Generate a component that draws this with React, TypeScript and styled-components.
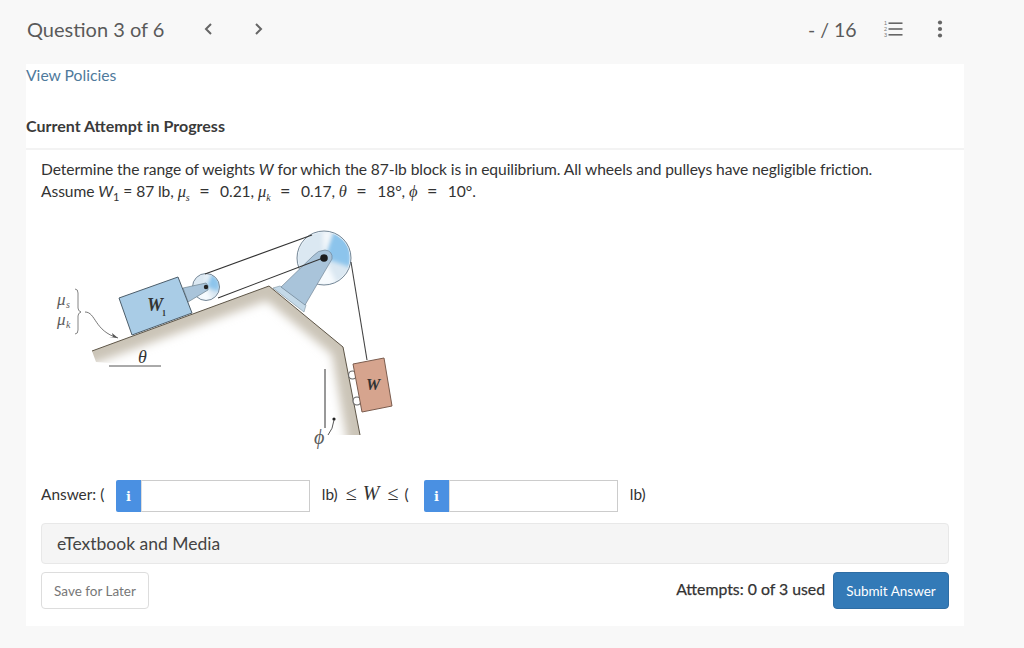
import React from "react";
import styled, { createGlobalStyle } from "styled-components";

const Global = createGlobalStyle`
  html, body { margin: 0; padding: 0; background: #f8f8f8; }
  body { font-family: Lato, "Open Sans", sans-serif; color: #333; }
`;
const Page = styled.div`
  width: 1024px;
  height: 648px;
  overflow: hidden;
  background: #f8f8f8;
`;
const Header = styled.header`
  height: 64px;
  box-sizing: border-box;
  padding: 0 0 6px 26px;
  display: flex;
  align-items: center;
`;
const QuestionTitle = styled.h1`
  margin: 0;
  font-size: 20px;
  font-weight: 400;
  color: #5a5a5a;
  width: 155px;
  padding-left: 1px;
`;
const NavButton = styled.button`
  width: 51px;
  height: 30px;
  padding: 0;
  border: 0;
  background: none;
  display: flex;
  align-items: center;
  justify-content: center;
  color: #666;
`;
const Score = styled.div`
  margin-left: auto;
  font-size: 19.5px;
  color: #5a5a5a;
  width: 66px;
`;
const IconSlot = styled.div`
  width: 38px;
  display: flex;
  justify-content: center;
  align-items: center;
`;
const HeaderEnd = styled.div`
  width: 56px;
  margin-right: 56px;
  display: flex;
  justify-content: center;
`;
const Card = styled.main`
  width: 938px;
  height: 562px;
  margin-left: 26px;
  background: #fff;
`;
const Policies = styled.a`
  display: block;
  height: 21px;
  padding-top: 1px;
  font-size: 15.7px;
  line-height: 21px;
  color: #4f7a9c;
`;
const AttemptTitle = styled.h2`
  margin: 30px 0 0;
  height: 32px;
  box-sizing: border-box;
  font-size: 16px;
  line-height: 20px;
  font-weight: 700;
  color: #3a3a3a;
`;
const Rule = styled.div`
  height: 2px;
  background: #f3f3f3;
`;
const Body = styled.section`
  padding: 8px 15px 0;
`;
const Prompt = styled.p`
  margin: 0;
  height: 44px;
  font-size: 15.6px;
  line-height: 22px;
  color: #333;
  letter-spacing: -0.08px;
`;
const MathVar = styled.i`
  font-family: "Liberation Serif", serif;
  font-size: 16.5px;
  line-height: 0;
`;
const PlainVar = styled.i``;
const Sub = styled.sub`
  font-size: 11px;
  line-height: 0;
  font-family: Lato, sans-serif;
`;
const MathSub = styled.sub`
  font-size: 10px;
  line-height: 0;
  font-family: "Liberation Serif", serif;
  font-style: italic;
`;
const Eq = styled.span`
  margin: 0 6px 0 5px;
  font-size: 18px;
  line-height: 0;
`;
const Figure = styled.svg`
  display: block;
  width: 360px;
  height: 260px;
  margin: 8px 0 0 0;
`;
const AnswerRow = styled.div`
  height: 32px;
  margin-top: 10px;
  display: flex;
  align-items: center;
  font-size: 15.4px;
  color: #333;
`;
const Label = styled.span<{ $w: number }>`
  width: ${(p) => p.$w}px;
  flex: none;
  white-space: nowrap;
  padding-bottom: 5px;
`;
const InfoButton = styled.div`
  width: 25px;
  height: 32px;
  background: #4a90e2;
  border-radius: 2px 0 0 2px;
  display: flex;
  align-items: center;
  justify-content: center;
  color: #fff;
  font: 700 13px "DejaVu Serif", serif;
  flex: none;
`;
const AnswerInput = styled.div`
  width: 169px;
  height: 32px;
  box-sizing: border-box;
  border: 1px solid #ccc;
  border-left: 1px solid #ddd;
  background: #fff;
  flex: none;
`;
const Leq = styled.span`
  margin: 0 6px 0 8px;
  font-family: "Liberation Serif", serif;
  font-size: 20px;
  line-height: 0;
`;
const WVar = styled.i`
  font-family: "Liberation Serif", serif;
  font-size: 20px;
  line-height: 0;
`;
const Resources = styled.div`
  height: 41px;
  margin-top: 11px;
  box-sizing: border-box;
  padding: 0 15px;
  display: flex;
  align-items: center;
  background: #f5f5f5;
  border: 1px solid #e8e8e8;
  border-radius: 4px;
  font-size: 17.5px;
  color: #444;
`;
const Actions = styled.div`
  margin-top: 8px;
  height: 37px;
  display: flex;
  align-items: center;
`;
const SaveButton = styled.button`
  width: 108px;
  height: 37px;
  border: 1px solid #ddd;
  border-radius: 4px;
  background: #fff;
  font: 400 13.5px Lato, sans-serif;
  color: #777;
  padding: 0;
`;
const Attempts = styled.span`
  margin-left: auto;
  margin-right: 8px;
  margin-bottom: 5px;
  font-size: 15.8px;
  -webkit-text-stroke: 0.25px #333;
  color: #333;
`;
const SubmitButton = styled.button`
  width: 116px;
  height: 37px;
  border: 1px solid #2e6da4;
  border-radius: 4px;
  background: #337ab7;
  font: 400 13.5px Lato, sans-serif;
  color: #fff;
  padding: 0;
`;
const DiagramText = styled.text<{ $size: number; $weight?: number }>`
  font-family: "Liberation Serif", serif;
  font-style: italic;
  font-weight: ${(p) => p.$weight ?? 700};
  font-size: ${(p) => p.$size}px;
  fill: #333;
`;
const LightText = styled.text<{ $size: number }>`
  font-family: "Liberation Serif", serif;
  font-style: italic;
  font-size: ${(p) => p.$size}px;
  fill: #5c5c5c;
`;
const TinyText = styled.text`
  font-family: "Liberation Serif", serif;
  font-size: 8px;
  font-weight: 700;
  fill: #333;
`;
const IconDigit = styled.text`
  font-family: "Liberation Sans", sans-serif;
  font-size: 5.5px;
  fill: #777;
`;

function Chevron({ left }: { left?: boolean }) {
  return (
    <svg width="14" height="16" viewBox="0 0 14 16" fill="none" stroke="currentColor" strokeWidth="2">
      <path d={left ? "M10 3 L5 8 L10 13" : "M4 3 L9 8 L4 13"} />
    </svg>
  );
}

function ListIcon() {
  return (
    <svg width="20" height="18" viewBox="0 0 20 18" fill="#666">
      <rect x="5.5" y="2.4" width="14" height="1.6" />
      <rect x="5.5" y="8.2" width="14" height="1.6" />
      <rect x="5.5" y="14" width="14" height="1.6" />
      <IconDigit x="1" y="5">1</IconDigit>
      <IconDigit x="1" y="11">2</IconDigit>
      <IconDigit x="1" y="17">3</IconDigit>
    </svg>
  );
}

function Dots() {
  return (
    <svg width="6" height="18" viewBox="0 0 6 18" fill="#666">
      <circle cx="3" cy="2.5" r="2.1" />
      <circle cx="3" cy="9" r="2.1" />
      <circle cx="3" cy="15.5" r="2.1" />
    </svg>
  );
}

function Pulley({ cx, cy, r, clip }: { cx: number; cy: number; r: number; clip: string }) {
  return (
    <g>
      <clipPath id={clip}>
        <circle cx={cx} cy={cy} r={r} />
      </clipPath>
      <circle cx={cx} cy={cy} r={r} fill="#dbe8f2" />
      <g clipPath={`url(#${clip})`}>
        <path
          d={`M${cx} ${cy} L${cx + r * 0.35} ${cy - r} L${cx + r} ${cy - r * 0.6} L${cx + r} ${cy + r * 0.35} Z`}
          fill="#8cc4ec"
          filter="url(#soft)"
        />
        <path
          d={`M${cx} ${cy} L${cx - r * 0.9} ${cy + r * 0.7} L${cx - r * 0.1} ${cy + r * 1.1} L${cx + r * 0.5} ${cy + r} Z`}
          fill="#f7fbfe"
          filter="url(#soft)"
        />
        <path
          d={`M${cx} ${cy} L${cx - r * 0.05} ${cy - r} L${cx + r * 0.3} ${cy - r} Z`}
          fill="#f4f8fb"
          filter="url(#soft)"
        />
        <circle cx={cx} cy={cy} r={r} fill="none" stroke="#eef5fa" strokeWidth={r * 0.1} opacity="0.8" />
      </g>
      <circle cx={cx} cy={cy} r={r} fill="none" stroke="#66798a" strokeWidth="0.9" />
    </g>
  );
}

function Diagram() {
  return (
    <Figure viewBox="41 210 360 260">
      <defs>
        <filter id="soft" x="-30%" y="-30%" width="160%" height="160%">
          <feGaussianBlur stdDeviation="2" />
        </filter>
        <filter id="shadeBlur" x="-20%" y="-20%" width="140%" height="140%">
          <feGaussianBlur stdDeviation="5" />
        </filter>
        <clipPath id="groundClip">
          <path d="M92 351 L269 286 L343 347 L360 435 L330 435 L300 380 L200 370 L96 362 Z" />
        </clipPath>
      </defs>

      <g clipPath="url(#groundClip)">
        <path d="M80 356 L269 287 L343 348 L360 445" fill="none" stroke="#cbc4b7" strokeWidth="24" filter="url(#shadeBlur)" />
      </g>
      <path d="M92 351 L269 286 L343 347 L360 435" fill="none" stroke="#5d5547" strokeWidth="1" />

      <Pulley cx={206} cy={287} r={13.5} clip="smallPulley" />
      <path d="M183 288 L206 283 Q209 285 208 290 L188 302 Z" fill="#a9c4da" stroke="#60737f" strokeWidth="0.6" />
      <circle cx="206" cy="287" r="2.2" fill="#222" />

      <path d="M119 298 L178 277 L192 313 L132 335 Z" fill="#a9cce6" stroke="#4c5d6a" strokeWidth="1" />
      <DiagramText x="147" y="311" $size={18}>W</DiagramText>
      <TinyText x="162" y="316">1</TinyText>

      <Pulley cx={324} cy={258} r={27} clip="bigPulley" />
      <path d="M205 274 L312 235" fill="none" stroke="#333" strokeWidth="1.1" />
      <path d="M273 288 L280 286 L306 305 L304 312 Z" fill="#c4d9e8" stroke="#7c92a0" strokeWidth="0.6" />
      <path d="M281 287 L313 256 Q318 250 325 250 Q333 251 332 259 L305 305 Z" fill="#a9c4da" stroke="#66798a" strokeWidth="0.6" />
      <path d="M218 298 L323 258" fill="none" stroke="#333" strokeWidth="1.1" />
      <circle cx="324" cy="258" r="3.8" fill="#1c1c1c" />
      <path d="M351 262 L367 360" fill="none" stroke="#444" strokeWidth="1.1" />

      <circle cx="352.5" cy="375" r="4" fill="#fff" stroke="#666" strokeWidth="1.2" />
      <circle cx="357" cy="401" r="4" fill="#fff" stroke="#666" strokeWidth="1.2" />
      <path d="M353 364 L384 358 L392 406 L362 412 Z" fill="#d6a48e" stroke="#7b5c4e" strokeWidth="1" />
      <DiagramText x="366" y="390" $size={16}>W</DiagramText>

      <path d="M325 369 L325 428" stroke="#333" strokeWidth="1" />
      <circle cx="334" cy="419" r="1.6" fill="#222" />
      <path d="M334 420 Q333 429 328 435" fill="none" stroke="#444" strokeWidth="0.9" />
      <LightText x="314" y="444" $size={20}>ϕ</LightText>

      <path d="M109 366 L161 366" stroke="#555" strokeWidth="1" />
      <DiagramText x="138" y="363" $size={18} $weight={400}>θ</DiagramText>

      <LightText x="57" y="305" $size={17}>μ</LightText>
      <LightText x="66" y="308" $size={10}>s</LightText>
      <LightText x="57" y="325" $size={17}>μ</LightText>
      <LightText x="66" y="328" $size={10}>k</LightText>
      <path d="M75 289 Q78 289 78 293 L78 308 Q78 311 81 312 Q78 313 78 316 L78 330 Q78 334 75 334" fill="none" stroke="#666" strokeWidth="0.8" />
      <path d="M85 312 C96 312 94 331 118 338" fill="none" stroke="#555" strokeWidth="0.8" />
      <path d="M118 338 L112 333 L113 337 L109 337 Z" fill="#555" />
    </Figure>
  );
}

export default function App() {
  return (
    <Page>
      <Global />
      <Header>
        <QuestionTitle>Question 3 of 6</QuestionTitle>
        <NavButton aria-label="Previous"><Chevron left /></NavButton>
        <NavButton aria-label="Next"><Chevron /></NavButton>
        <Score>- / 16</Score>
        <IconSlot><ListIcon /></IconSlot>
        <HeaderEnd><Dots /></HeaderEnd>
      </Header>
      <Card>
        <Policies>View Policies</Policies>
        <AttemptTitle>Current Attempt in Progress</AttemptTitle>
        <Rule />
        <Body>
          <Prompt>
            Determine the range of weights <PlainVar>W</PlainVar> for which the 87-lb block is in equilibrium. All wheels and pulleys have negligible friction.
            <br />
            Assume <PlainVar>W</PlainVar><Sub>1</Sub> = 87 lb, <MathVar>μ</MathVar><MathSub>s</MathSub><Eq> = </Eq>0.21, <MathVar>μ</MathVar><MathSub>k</MathSub><Eq> = </Eq>0.17, <MathVar>θ</MathVar><Eq> = </Eq>18°, <MathVar>ϕ</MathVar><Eq> = </Eq>10°.
          </Prompt>
          <Diagram />
          <AnswerRow>
            <Label $w={75}>Answer: (</Label>
            <InfoButton>i</InfoButton>
            <AnswerInput />
            <Label $w={114}>
              &nbsp;&nbsp;&nbsp;lb)<Leq>≤</Leq><WVar>W</WVar><Leq>≤</Leq>(
            </Label>
            <InfoButton>i</InfoButton>
            <AnswerInput />
            <Label $w={40}>&nbsp;&nbsp;&nbsp;lb)</Label>
          </AnswerRow>
          <Resources>eTextbook and Media</Resources>
          <Actions>
            <SaveButton>Save for Later</SaveButton>
            <Attempts>Attempts: 0 of 3 used</Attempts>
            <SubmitButton>Submit Answer</SubmitButton>
          </Actions>
        </Body>
      </Card>
    </Page>
  );
}
